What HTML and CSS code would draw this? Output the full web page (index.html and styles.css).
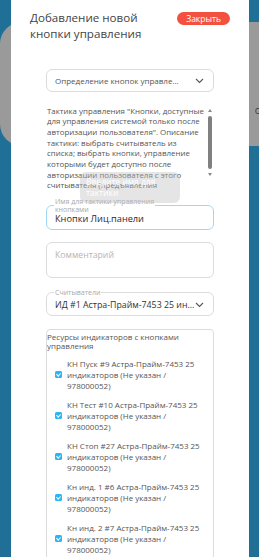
FILE: index.html
```html
<!DOCTYPE html>
<html lang="ru">
<head>
    <meta charset="UTF-8">
    <meta name="viewport" content="width=device-width, initial-scale=1.0">
    <title>Добавление новой кнопки управления</title>
    <link rel="stylesheet" href="styles.css">
</head>
<body>
    <div class="screen">
        <div class="bg-card"><span>ого</span></div>
    </div>

    <div class="modal">
        <div class="modal-header">
            <h2>Добавление новой кнопки управления</h2>
            <button class="close-btn">Закрыть</button>
        </div>

        <form class="modal-form">
            <div class="select-box">
                <span>Определение кнопок управле...</span>
                <svg class="chevron" width="9" height="6" viewBox="0 0 9 6"><path d="M1 1l3.5 3.5L8 1" fill="none" stroke="#555" stroke-width="1.1"/></svg>
            </div>

            <div class="tactic-text">
                <p>Тактика управления "Кнопки, доступные<br>
                для управления системой только после<br>
                авторизации пользователя". Описание<br>
                тактики: выбрать считыватель из<br>
                списка; выбрать кнопки, управление<br>
                которыми будет доступно после<br>
                авторизации пользователя с этого<br>
                считывателя (предъявления<br>
                карты).</p>
                <div class="scrollbar">
                    <span class="arrow up"></span>
                    <span class="thumb"></span>
                    <span class="arrow down"></span>
                </div>
                <div class="tooltip">Введите имя для<br>тактики</div>
            </div>

            <fieldset class="field name-field">
                <legend>Имя для тактики управления<br>кнопками</legend>
                <div class="field-value">Кнопки Лиц.панели</div>
            </fieldset>

            <div class="comment-box">Комментарий</div>

            <fieldset class="field reader-field">
                <legend>Считыватели</legend>
                <div class="field-value">
                    <span>ИД #1 Астра-Прайм-7453 25 ин...</span>
                    <svg class="chevron" width="9" height="6" viewBox="0 0 9 6"><path d="M1 1l3.5 3.5L8 1" fill="none" stroke="#555" stroke-width="1.1"/></svg>
                </div>
            </fieldset>

            <div class="resources">
                <div class="resources-title">Ресурсы индикаторов с кнопками<br>управления</div>
                <ul class="resource-list">
                    <li><span class="check"></span><span>КН Пуск #9 Астра-Прайм-7453 25<br>индикаторов (Не указан /<br>978000052)</span></li>
                    <li><span class="check"></span><span>КН Тест #10 Астра-Прайм-7453 25<br>индикаторов (Не указан /<br>978000052)</span></li>
                    <li><span class="check"></span><span>КН Стоп #27 Астра-Прайм-7453 25<br>индикаторов (Не указан /<br>978000052)</span></li>
                    <li><span class="check"></span><span>Кн инд. 1 #6 Астра-Прайм-7453 25<br>индикаторов (Не указан /<br>978000052)</span></li>
                    <li><span class="check"></span><span>Кн инд. 2 #7 Астра-Прайм-7453 25<br>индикаторов (Не указан /<br>978000052)</span></li>
                </ul>
            </div>
        </form>
    </div>
</body>
</html>
```

FILE: styles.css
```css
* {
    margin: 0;
    padding: 0;
    box-sizing: border-box;
    font-family: "Open Sans", sans-serif;
}

body {
    background: #1f6f96;
    height: 557px;
    overflow: hidden;
    position: relative;
}

/* Screen behind the modal */
.screen {
    padding-top: 22px;
}

.bg-card {
    width: 290px;
    height: 124px;
    background: #9a9a9a;
    border-radius: 22px;
    display: flex;
    align-items: center;
    justify-content: flex-end;
    padding-right: 19px;
}

.bg-card span {
    font-size: 10px;
    color: #3a3a3a;
    margin-top: 52px;
}

/* Modal */
.modal {
    position: absolute;
    top: 0;
    left: 11px;
    width: 238px;
    height: 557px;
    background: #fff;
    overflow: hidden;
}

.modal-header {
    display: flex;
    justify-content: space-between;
    align-items: flex-start;
    padding: 10px 19px 0 19px;
}

.modal-header h2 {
    font-size: 11.6px;
    font-weight: 400;
    line-height: 15.5px;
    color: #444;
    width: 120px;
}

.close-btn {
    margin-top: 2px;
    height: 13px;
    padding: 0 9px;
    border: none;
    border-radius: 7px;
    background: #f4503f;
    color: #fff;
    font-size: 8.5px;
    line-height: 13px;
}

.modal-form {
    width: 168px;
    margin-left: 35px;
}

.select-box {
    margin-top: 28px;
    height: 23px;
    border: 1px solid #dcdcdc;
    border-radius: 6px;
    display: flex;
    align-items: center;
    justify-content: space-between;
    padding: 0 9px 0 8px;
    font-size: 8px;
    color: #555;
    white-space: nowrap;
}

/* Description text with its scrollbar */
.tactic-text {
    margin-top: 8px;
    height: 97px;
    display: flex;
    align-items: flex-start;
    position: relative;
}

.tactic-text p {
    flex: 1;
    height: 91px;
    overflow: hidden;
    padding: 5.5px 0 0 1px;
    font-size: 7.9px;
    line-height: 10.7px;
    color: #555;
    white-space: nowrap;
}

.scrollbar {
    width: 6px;
    margin-right: 1px;
    display: flex;
    flex-direction: column;
    align-items: center;
    gap: 4px;
    padding-top: 9px;
}

.arrow {
    width: 0;
    height: 0;
    border-left: 2.5px solid transparent;
    border-right: 2.5px solid transparent;
}

.arrow.up {
    border-bottom: 3px solid #888;
}

.arrow.down {
    border-top: 3px solid #888;
}

.thumb {
    width: 4px;
    height: 53px;
    border-radius: 2px;
    background: #808080;
}

.tooltip {
    position: absolute;
    left: 34px;
    top: 72px;
    width: 100px;
    height: 31px;
    padding: 4px 6px;
    border-radius: 6px;
    background: rgba(190, 190, 190, 0.4);
    color: #fff;
    font-size: 8.5px;
    line-height: 11px;
}

/* Outlined fields */
.field {
    border: 1px solid #dcdcdc;
    border-radius: 6px;
    padding: 0 8px;
    min-width: 0;
}

.field legend {
    font-size: 7px;
    line-height: 7.5px;
    color: #a8a8a8;
    padding: 0 1px;
    margin-left: -1px;
}

.field-value {
    font-size: 9.2px;
    line-height: 11px;
    color: #2a2a2a;
    white-space: nowrap;
}

.name-field {
    margin-top: 1px;
    border-color: #9ed8f5;
    padding-bottom: 5px;
}

.comment-box {
    margin-top: 12px;
    height: 36px;
    border: 1px solid #dcdcdc;
    border-radius: 6px;
    padding: 6px 8px;
    font-size: 8.7px;
    color: #b5b5b5;
}

.reader-field {
    margin-top: 10.5px;
    padding: 3.5px 9px 4px 8px;
}

.reader-field .field-value {
    display: flex;
    align-items: center;
    justify-content: space-between;
    font-size: 8.8px;
    color: #333;
}

/* Resource checklist */
.resources {
    margin-top: 13px;
    border: 1px solid #dcdcdc;
    border-radius: 4px;
    padding-top: 2px;
    height: 240px;
}

.resources-title {
    font-size: 8px;
    line-height: 9.5px;
    color: #555;
    white-space: nowrap;
}

.resource-list {
    list-style: none;
    margin-top: 7.5px;
    display: flex;
    flex-direction: column;
    gap: 8px;
}

.resource-list li {
    display: flex;
    align-items: center;
    gap: 5px;
    padding-left: 8px;
    font-size: 8px;
    line-height: 11px;
    color: #555;
    white-space: nowrap;
}

.check {
    flex: none;
    width: 7px;
    height: 7px;
    border-radius: 1.5px;
    background: #2bb5f4;
    position: relative;
}

.check::after {
    content: "";
    position: absolute;
    left: 2.3px;
    top: 0.8px;
    width: 1.6px;
    height: 3.4px;
    border: solid #fff;
    border-width: 0 1px 1px 0;
    transform: rotate(45deg);
}
```
